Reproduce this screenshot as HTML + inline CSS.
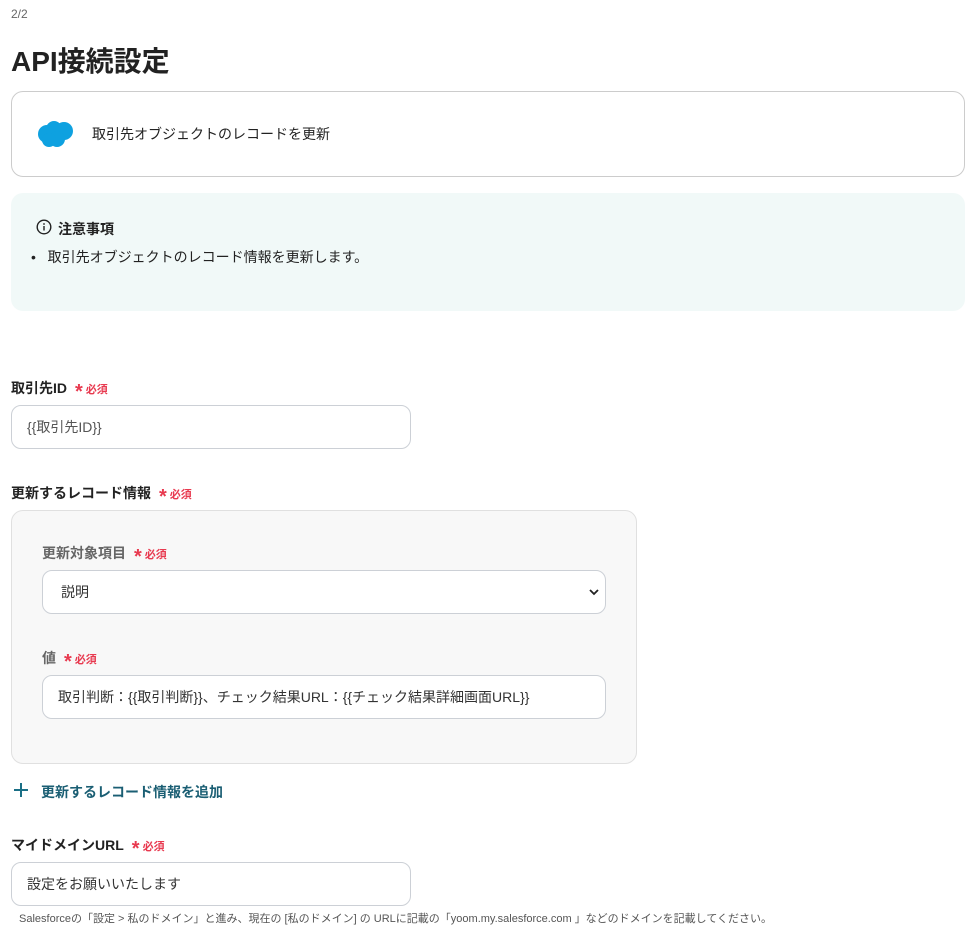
<!DOCTYPE html>
<html><head><meta charset="utf-8"><style>
*{box-sizing:border-box;margin:0;padding:0}
body{width:973px;height:932px;background:#fff;font-family:"Liberation Sans","Noto Sans CJK JP",sans-serif;color:#222;position:relative;overflow:hidden}
.a{position:absolute}
.lbl{font-size:14px;font-weight:bold;color:#222}
.req{color:#e8394f;font-size:11px;font-weight:bold;margin-left:8px}
.req b{font-size:20px;vertical-align:-5px;margin-right:3px}
.inp{border:1px solid #ccd0d6;border-radius:10px;background:#fff;font-size:14px;color:#333;padding-left:15px;display:flex;align-items:center}
</style></head><body>
<div class="a" style="left:11px;top:7px;font-size:12px;color:#666">2/2</div>
<div class="a" style="left:11px;top:40px;font-size:28px;font-weight:bold;color:#222">API接続設定</div>
<div class="a" style="left:11px;top:91px;width:954px;height:86px;border:1px solid #ccc;border-radius:12px"></div>
<svg class="a" style="left:37px;top:120px" width="38" height="28" viewBox="0 0 38 28"><g fill="#0ea1e0"><circle cx="10" cy="14" r="9"/><circle cx="17" cy="9" r="8"/><circle cx="27" cy="11" r="9"/><circle cx="20" cy="19" r="8"/><circle cx="12" cy="20" r="7"/></g></svg>
<div class="a" style="left:92px;top:124px;font-size:14px">取引先オブジェクトのレコードを更新</div>
<div class="a" style="left:11px;top:193px;width:954px;height:118px;background:#f1f9f8;border-radius:12px"></div>
<svg class="a" style="left:36px;top:219px" width="16" height="16" viewBox="0 0 16 16"><circle cx="8" cy="8" r="6.8" fill="none" stroke="#222" stroke-width="1.4"/><rect x="7.3" y="7" width="1.4" height="4.5" fill="#222"/><circle cx="8" cy="5" r=".9" fill="#222"/></svg>
<div class="a" style="left:58px;top:219px;font-size:14px;font-weight:bold">注意事項</div>
<div class="a" style="left:31px;top:247px;font-size:14px">•&nbsp;&nbsp; 取引先オブジェクトのレコード情報を更新します。</div>
<div class="a lbl" style="left:11px;top:378px">取引先ID<span class="req"><b>*</b>必須</span></div>
<div class="a inp" style="left:11px;top:405px;width:400px;height:44px;color:#555">{{取引先ID}}</div>
<div class="a lbl" style="left:11px;top:483px">更新するレコード情報<span class="req"><b>*</b>必須</span></div>
<div class="a" style="left:11px;top:510px;width:626px;height:254px;background:#f8f8f8;border:1px solid #e0e0e0;border-radius:12px"></div>
<div class="a lbl" style="left:42px;top:543px;color:#666">更新対象項目<span class="req"><b>*</b>必須</span></div>
<div class="a inp" style="left:42px;top:570px;width:564px;height:44px;padding-left:18px">説明<svg class="a" style="right:6px;top:17px" width="10" height="8" viewBox="0 0 10 8"><path d="M1 2l4 4 4-4" fill="none" stroke="#222" stroke-width="1.8"/></svg></div>
<div class="a lbl" style="left:42px;top:648px;color:#666">値<span class="req"><b>*</b>必須</span></div>
<div class="a inp" style="left:42px;top:675px;width:564px;height:44px;color:#333">取引判断：{{取引判断}}、チェック結果URL：{{チェック結果詳細画面URL}}</div>
<svg class="a" style="left:14px;top:783px" width="14" height="14" viewBox="0 0 14 14"><path d="M7 0v14M0 7h14" stroke="#1a6f86" stroke-width="2"/></svg>
<div class="a" style="left:41px;top:782px;font-size:14px;font-weight:bold;color:#1a5e73">更新するレコード情報を追加</div>
<div class="a lbl" style="left:11px;top:835px">マイドメインURL<span class="req"><b>*</b>必須</span></div>
<div class="a inp" style="left:11px;top:862px;width:400px;height:44px">設定をお願いいたします</div>
<div class="a" style="left:19px;top:910px;font-size:11px;color:#555">Salesforceの「設定 &gt; 私のドメイン」と進み、現在の [私のドメイン] の URLに記載の「yoom.my.salesforce.com 」などのドメインを記載してください。</div>
</body></html>
